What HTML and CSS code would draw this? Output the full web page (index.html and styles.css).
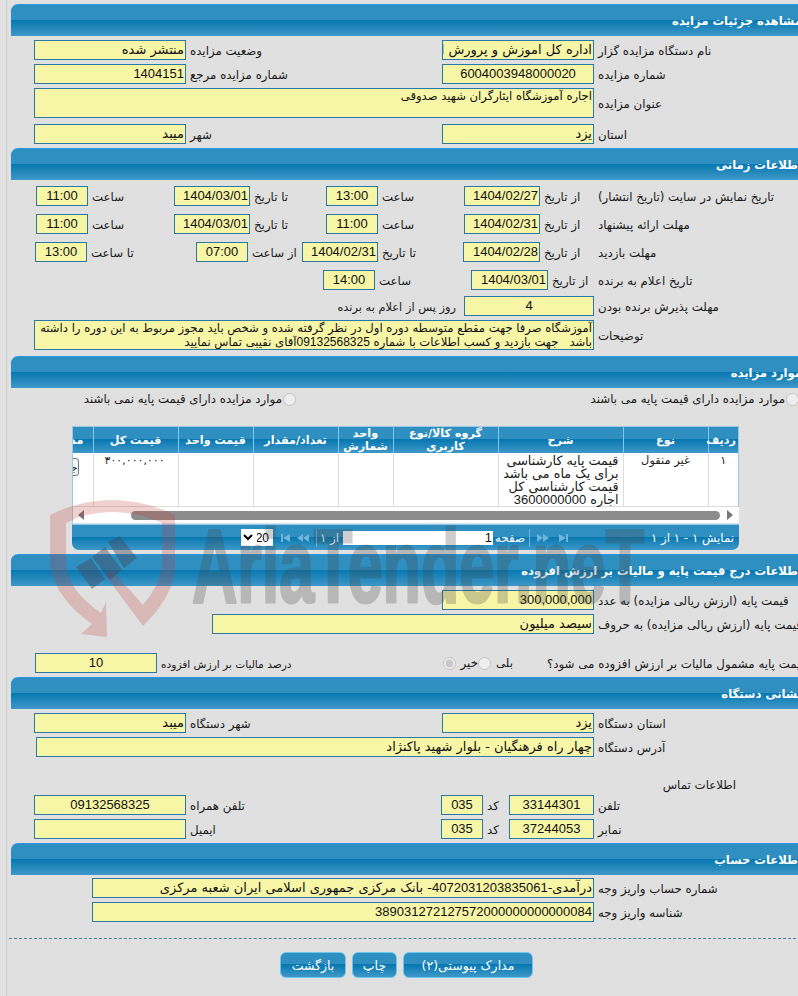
FILE: index.html
```html
<!DOCTYPE html>
<html lang="fa">
<head>
<meta charset="utf-8">
<title>مشاهده جزئیات مزایده</title>
<link rel="stylesheet" href="styles.css">
</head>
<body>
<div class="shell">
<main class="page">

<h2 class="bar">مشاهده جزئیات مزایده</h2>
<section class="body">
  <div class="row g-two"><label class="l">نام دستگاه مزایده گزار</label><div class="f">اداره کل اموزش و پرورش استان یزد</div><label class="l">وضعیت مزایده</label><div class="f">منتشر شده</div></div>
  <div class="row g-two"><label class="l">شماره مزایده</label><div class="f num c">6004003948000020</div><label class="l">شماره مزایده مرجع</label><div class="f num">1404151</div></div>
  <div class="row g-wide w560 gap6"><label class="l">عنوان مزایده</label><div class="f area">اجاره آموزشگاه ایثارگران شهید صدوقی</div></div>
  <div class="row g-two"><label class="l">استان</label><div class="f">یزد</div><label class="l">شهر</label><div class="f">میبد</div></div>
</section>

<h2 class="bar">اطلاعات زمانی</h2>
<section class="body time">
  <div class="row g-t1"><label class="l">تاریخ نمایش در سایت (تاریخ انتشار)</label><label class="l">از تاریخ</label><div class="f num">1404/02/27</div><label class="l">ساعت</label><div class="f num c">13:00</div><label class="l">تا تاریخ</label><div class="f num">1404/03/01</div><label class="l">ساعت</label><div class="f num c">11:00</div></div>
  <div class="row g-t1"><label class="l">مهلت ارائه پیشنهاد</label><label class="l">از تاریخ</label><div class="f num">1404/02/31</div><label class="l">ساعت</label><div class="f num c">11:00</div><label class="l">تا تاریخ</label><div class="f num">1404/03/01</div><label class="l">ساعت</label><div class="f num c">11:00</div></div>
  <div class="row g-t3"><label class="l">مهلت بازدید</label><label class="l">از تاریخ</label><div class="f num">1404/02/28</div><label class="l">تا تاریخ</label><div class="f num">1404/02/31</div><label class="l">از ساعت</label><div class="f num c">07:00</div><label class="l">تا ساعت</label><div class="f num c">13:00</div></div>
  <div class="row g-t4 gap6"><label class="l">تاریخ اعلام به برنده</label><label class="l">از تاریخ</label><div class="f num">1404/03/01</div><label class="l">ساعت</label><div class="f num c">14:00</div></div>
  <div class="row g-t5 gap4"><label class="l">مهلت پذیرش برنده بودن</label><div class="f num c">4</div><span class="after">روز پس از اعلام به برنده</span></div>
  <div class="row g-wide w560 gap0"><label class="l">توضیحات</label><div class="f area">آموزشگاه صرفا جهت مقطع متوسطه دوره اول در نظر گرفته شده و شخص باید مجوز مربوط به این دوره را داشته باشد&nbsp;&nbsp; جهت بازدید و کسب اطلاعات با شماره <span class="num">09132568325</span>آقای نقیبی تماس نمایید</div></div>
</section>

<h2 class="bar">موارد مزایده</h2>
<section class="items">
  <div class="radios">
    <label class="radio r1"><input type="radio" name="base" disabled>موارد مزایده دارای قیمت پایه می باشند</label>
    <label class="radio"><input type="radio" name="base" disabled>موارد مزایده دارای قیمت پایه نمی باشند</label>
  </div>
  <div class="grid-wrap">
    <div class="grid-scroll">
      <table class="grid">
        <colgroup><col class="c1"><col class="c2"><col class="c3"><col class="c4"><col class="c5"><col class="c6"><col class="c7"><col class="c8"><col class="c9"></colgroup>
        <thead><tr><th>ردیف</th><th>نوع</th><th>شرح</th><th>گروه کالا/نوع کاربری</th><th>واحد شمارش</th><th>تعداد/مقدار</th><th>قیمت واحد</th><th>قیمت کل</th><th class="th-last">مدارک</th></tr></thead>
        <tbody><tr><td>۱</td><td>غیر منقول</td><td class="desc">قیمت پایه کارشناسی برای یک ماه می باشد قیمت کارشناسی کل اجاره <span class="num">3600000000</span></td><td></td><td></td><td></td><td></td><td class="sum">۳۰۰,۰۰۰,۰۰۰</td><td class="btn-cell"><button class="mini" type="button" disabled>جزئیات</button></td></tr></tbody>
      </table>
    </div>
    <div class="hscroll">
      <svg class="arrow" width="6" height="10" viewBox="0 0 6 10"><path d="M0 0l6 5-6 5z"/></svg>
      <div class="thumb"></div>
      <svg class="arrow" width="6" height="10" viewBox="0 0 6 10"><path d="M6 0L0 5l6 5z"/></svg>
    </div>
    <div class="pager">
      <span class="pinfo">نمایش ۱ - ۱ از ۱</span>
      <svg class="pic ic-last" width="10" height="8" viewBox="0 0 10 8"><path d="M8 0v8h2V0zM1 0l7 4-7 4z"/></svg>
      <svg class="pic" width="12" height="8" viewBox="0 0 12 8"><path d="M0 0l6 4-6 4zM6 0l6 4-6 4z"/></svg>
      <i class="psep s1"></i>
      <span class="plab">صفحه</span>
      <input class="pinput" type="text" value="1">
      <span class="plab2">از ۱</span>
      <i class="psep s2"></i>
      <svg class="pic" width="12" height="8" viewBox="0 0 12 8"><path d="M12 0L6 4l6 4zM6 0L0 4l6 4z"/></svg>
      <svg class="pic gapi" width="10" height="8" viewBox="0 0 10 8"><path d="M0 0v8h2V0zM9 0L2 4l7 4z"/></svg>
      <select class="psel"><option>20</option></select>
    </div>
  </div>
</section>

<h2 class="bar">اطلاعات درج قیمت پایه و مالیات بر ارزش افزوده</h2>
<section class="body tax">
  <div class="row g-wide w152"><label class="l">قیمت پایه (ارزش ریالی مزایده) به عدد</label><div class="f num">300,000,000</div></div>
  <div class="row g-wide w382 gap19"><label class="l">قیمت پایه (ارزش ریالی مزایده) به حروف</label><div class="f">سیصد میلیون</div></div>
  <div class="row g-vat"><label class="l nop">قیمت پایه مشمول مالیات بر ارزش افزوده می شود؟</label>
    <div class="yn"><label class="radio">بلی<input type="radio" name="vat" disabled></label><label class="radio">خیر<input type="radio" name="vat" disabled checked></label></div>
    <label class="l narrow">درصد مالیات بر ارزش افزوده</label><div class="f num c">10</div></div>
</section>

<h2 class="bar">نشانی دستگاه</h2>
<section class="body">
  <div class="row g-two"><label class="l">استان دستگاه</label><div class="f">یزد</div><label class="l">شهر دستگاه</label><div class="f">میبد</div></div>
  <div class="row g-wide w558"><label class="l">آدرس دستگاه</label><div class="f">چهار راه فرهنگیان - بلوار شهید پاکنژاد</div></div>
  <div class="contact">اطلاعات تماس</div>
  <div class="row g-tel"><label class="l">تلفن</label><div class="f num c">33144301</div><label class="l">کد</label><div class="f num c">035</div><label class="l">تلفن همراه</label><div class="f num c">09132568325</div></div>
  <div class="row g-tel"><label class="l">نمابر</label><div class="f num c">37244053</div><label class="l">کد</label><div class="f num c">035</div><label class="l">ایمیل</label><div class="f"></div></div>
</section>

<h2 class="bar">اطلاعات حساب</h2>
<section class="body acct">
  <div class="row g-wide w502"><label class="l">شماره حساب واریز وجه</label><div class="f">درآمدی-<span class="num">4072031203835061</span>- بانک مرکزی جمهوری اسلامی ایران شعبه مرکزی</div></div>
  <div class="row g-wide w502"><label class="l">شناسه واریز وجه</label><div class="f num">389031272127572000000000000084</div></div>
</section>

<div class="actions">
  <button class="btn b-docs" type="button">مدارک پیوستی(۲)</button>
  <button class="btn b-print" type="button">چاپ</button>
  <button class="btn b-back" type="button">بازگشت</button>
</div>

</main>
</div>

<svg class="mark" width="798" height="996" viewBox="0 0 798 996" aria-hidden="true">
  <path class="m-red" fill-rule="evenodd" d="M50 515Q80 500 112 500T175 515V572Q170 600 143 626L105 575 112 570 143 605Q160 585 162 565V523Q138 512 112 512T66 523V565Q68 590 101 613L106 602 107 637 81 634 92 624Q55 598 50 565Z"/>
  <path class="m-dark" d="M76 567L91 558 105 579 92 589ZM92 557L105 547 122 570 110 580ZM108 542L120 536 137 558 124 568Z"/>
  <text class="m-text" x="192" y="602" textLength="452" lengthAdjust="spacingAndGlyphs">AriaTender.neT</text>
</svg>
</body>
</html>
```
FILE: styles.css
```css
* { box-sizing: border-box; }
html, body { margin: 0; padding: 0; height: 996px; overflow: hidden; background: #e0e0e0; }
body {
  position: relative;
  font: 11.8px/14px "DejaVu Sans", "Liberation Sans", sans-serif;
  color: #1a1a1a;
}
.shell { width: 812px; margin-left: 6px; padding: 4px 0 0 4px; border-left: 1px solid #cccccc; height: 996px; }
.page { width: 800px; direction: rtl; }

.bar {
  margin: 0;
  height: 32px;
  padding: 9px 9px 0 0;
  font-size: 11.6px;
  line-height: 14px;
  font-weight: bold;
  color: #fff;
  border-top: 1px solid #2a95e0;
  border-radius: 7px 0 0 0;
  background: linear-gradient(#2f8fc0 0, #2f8fc0 47%, #0677b0 47%, #3f98c8 100%);
}

.body { padding: 4px 0 4px; }
.time { padding: 6px 0 6px; }
.acct { padding: 3px 0 0; }

.row { display: grid; justify-content: start; align-items: center; height: 20px; margin-bottom: 4px; }
.row:last-child { margin-bottom: 0; }
.g-two { grid-template-columns: 217px 152px 256px 152px; }
.g-t1 { grid-template-columns: 217px 54px 76px 86px 52px 76px 76px 86px 52px; margin-bottom: 8px; }
.g-t3 { grid-template-columns: 217px 54px 77px 85px 76px 54px 52px 109px 52px; margin-bottom: 8px; }
.g-t4 { grid-template-columns: 217px 46px 77px 96px 52px; }
.g-t5 { grid-template-columns: 217px 130px auto; }
.g-wide { grid-template-columns: 217px auto; }
.g-tel { grid-template-columns: 217px 85px 26px 42px 255px 152px; }
.g-vat { grid-template-columns: 264px 252px 138px 122px; }
.w152 { grid-template-columns: 217px 152px; }
.w382 { grid-template-columns: 217px 382px; }
.w502 { grid-template-columns: 217px 502px; }
.w558 { grid-template-columns: 217px 558px; }
.w560 { grid-template-columns: 217px 560px; height: 30px; }
.gap6 { margin-bottom: 6px; }
.gap4 { margin-bottom: 4px; }
.gap0 { margin-bottom: 0; }
.gap19 { margin-bottom: 19px; }

.l { display: block; text-align: left; padding: 2px 0 0 4px; white-space: nowrap; }
.nop { padding-left: 0; }
.narrow { font-size: 10.6px; }
.after { padding: 2px 8px 0 0; white-space: nowrap; font-size: 11.4px; }
.f {
  height: 20px;
  border: 1px solid #2a78a8;
  background: #f7f5a6;
  color: #111;
  padding: 1px 1px 0;
  font-size: 13px;
  line-height: 16px;
  white-space: nowrap;
  overflow: hidden;
}
.num { font-family: "Liberation Sans", "DejaVu Sans", sans-serif; font-size: 13px; }
.c { text-align: center; }
.area { height: 30px; white-space: normal; font-size: 11.6px; line-height: 14px; padding-top: 0; }
.area .num { font-size: 12px; }

.items { padding-top: 4px; }
.radios { display: grid; grid-template-columns: 503px auto; justify-content: start; padding-right: 12px; height: 14px; }
.radio { display: inline-flex; align-items: center; white-space: nowrap; }
.radio input { width: 13px; height: 13px; margin: 0 0 0 1px; }
.r1 { width: 503px; }

.grid-wrap { width: 667px; margin: 20px 72px 4px 0; }
.grid-scroll { height: 81px; overflow: hidden; border-left: 1px solid #9cc8e8; border-right: 1px solid #9cc8e8; border-top: 1px solid #9cc8e8; }
.grid { width: 725px; table-layout: fixed; border-collapse: collapse; }
.c1 { width: 30px; } .c2 { width: 85px; } .c3 { width: 125px; } .c4 { width: 105px; } .c5 { width: 55px; }
.c6 { width: 85px; } .c7 { width: 75px; } .c8 { width: 85px; } .c9 { width: 80px; }
.grid th {
  height: 26px;
  padding: 0 2px;
  color: #fff;
  font-size: 11.2px;
  line-height: 13px;
  font-weight: bold;
  border-left: 1px solid #7cc8f0;
  background: linear-gradient(#2f8fc0 0, #2f8fc0 47%, #0677b0 47%, #3f98c8 100%);
}
.grid th.th-last { text-align: right; padding-right: 9px; }
.grid td {
  height: 53px;
  padding: 1px 2px 0;
  vertical-align: top;
  text-align: center;
  background: #fff;
  border-left: 1px solid #dcdcdc;
  border-bottom: 1px solid #dcdcdc;
  font-size: 11.4px;
  line-height: 13px;
}
.grid td.desc { text-align: right; padding: 1px 4px 0 2px; font-size: 12.8px; }
.grid td.desc .num { font-size: 13px; }
.grid td.sum { font-size: 11px; text-align: left; padding-left: 11px; }
.grid td.btn-cell { padding: 5px 0 0; overflow: hidden; }
.mini { display: block; width: 66px; height: 18px; margin-right: 14px; padding: 0; text-align: right; direction: rtl; font: 11px "DejaVu Sans", sans-serif; background: #f4f4f4; border: 1px solid #777; border-radius: 3px; color: #222; }

.hscroll { display: flex; align-items: center; height: 16px; background: #fff; direction: ltr; padding-left: 5px; border-left: 1px solid #9cc8e8; }
.thumb { width: 589px; height: 9px; margin-right: 7px; border-radius: 5px; background: #8c8c8c; }
.arrow { fill: #777; transform: scaleX(-1); }
.arrow:first-child { margin-right: 47px; }

.pager {
  display: flex;
  align-items: center;
  height: 26px;
  margin-top: 1px;
  padding-right: 5px;
  color: #fff;
  border-radius: 0 0 7px 7px;
  border-top: 1px solid #8cc8ec;
  background: linear-gradient(#2f8fc0 0, #2f8fc0 47%, #0677b0 47%, #3f98c8 100%);
}
.pinfo { width: 166px; flex: none; }
.pic { fill: #6fb4dc; flex: none; }
.ic-last { margin-left: 9px; }
.gapi { margin-right: 6px; }
.psep { width: 1px; height: 18px; background: #6fb4dc; flex: none; }
.s1 { margin: 0 7px 0 4px; }
.s2 { margin: 0 2px 0 7px; }
.plab { width: 29px; flex: none; white-space: nowrap; margin-left: 3px; }
.pinput { width: 150px; height: 14px; padding: 0 1px; border: 0; background: #fff; direction: rtl; font: 13px "Liberation Sans", sans-serif; color: #111; flex: none; }
.plab2 { width: 20px; flex: none; margin-right: 4px; white-space: nowrap; }
.psel { width: 32px; height: 17px; margin-right: 8px; padding: 0; border: 0; background: #fff; font: 12px "Liberation Sans", sans-serif; direction: rtl; flex: none; }

.g-vat .yn { display: flex; padding-right: 34px; }
.yn .radio input { margin: 0 5px 0 0; }

.contact { margin: 21px 0 3px; height: 14px; padding-right: 75px; text-align: right; }
.acct .row { margin-bottom: 4px; }

.actions {
  display: flex;
  gap: 6px;
  margin: 16px 0 0 -2px;
  padding: 13px 278px 0 0;
  border-top: 1px dashed #4d7f9e;
}
.btn {
  height: 26px;
  padding: 0;
  font: 12.5px "DejaVu Sans", sans-serif;
  color: #fff;
  border: 1px solid #6cc6ee;
  border-radius: 6px;
  background: linear-gradient(#2f8fc0 0, #2f8fc0 47%, #0677b0 47%, #3f98c8 100%);
}
.b-docs { width: 130px; }
.b-print { width: 45px; }
.b-back { width: 66px; }

.mark { position: absolute; left: 0; top: 0; pointer-events: none; }
.m-red { fill: rgba(195, 60, 60, 0.24); }
.m-dark { fill: rgba(70, 70, 90, 0.42); }
.m-text { font: bold 104px "Liberation Sans", sans-serif; fill: #464646; stroke: #464646; stroke-width: 3px; stroke-linejoin: round; opacity: 0.26; }
```
